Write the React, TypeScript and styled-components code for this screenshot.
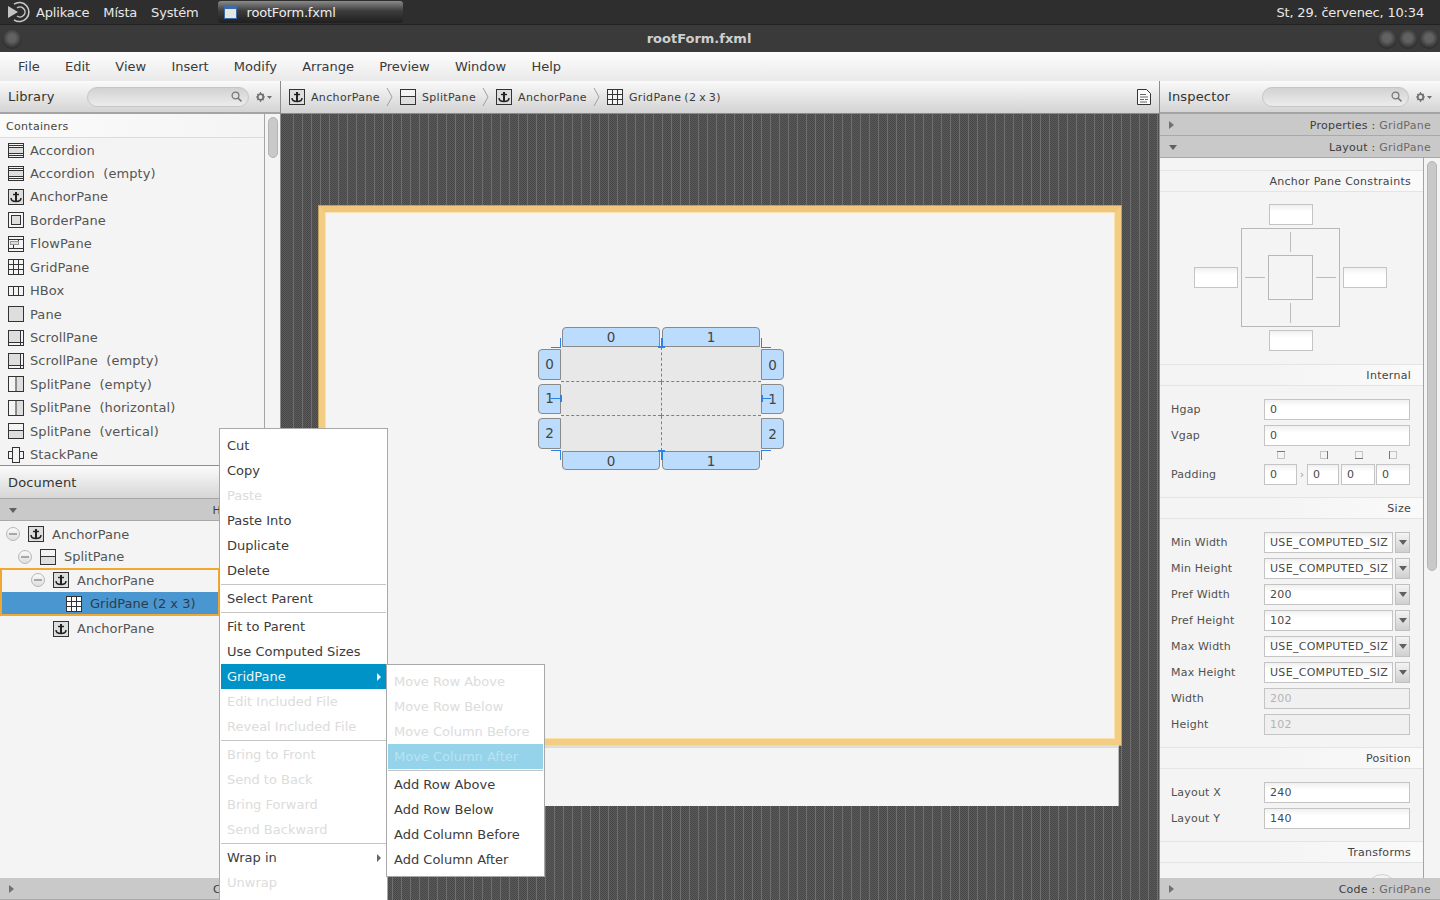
import React from "react";
import styled, { createGlobalStyle } from "styled-components";

const GlobalStyle = createGlobalStyle`
  html, body {
    margin: 0;
    padding: 0;
    width: 1440px;
    height: 900px;
    overflow: hidden;
    background: #f4f4f4;
  }
  * {
    box-sizing: border-box;
  }
  body {
    font-family: "DejaVu Sans", "Liberation Sans", sans-serif;
    font-size: 13px;
    color: #3a3a3a;
  }
`;

const Screen = styled.div`
  position: relative;
  display: flex;
  flex-direction: column;
  width: 1440px;
  height: 900px;
  overflow: hidden;
`;

/* desktop panel */
const TopPanel = styled.div`
  display: flex;
  align-items: center;
  height: 25px;
  flex: none;
  padding-left: 7px;
  background: #2e2e2e;
  border-bottom: 1px solid #222;
  color: #e8e8e8;
  letter-spacing: -0.18px;
`;

const PanelMenu = styled.span`
  margin-left: ${(p: { $gap: number }) => p.$gap}px;
`;

const TaskTab = styled.div`
  display: flex;
  align-items: center;
  gap: 10px;
  width: 185px;
  height: 22px;
  margin-left: 19px;
  padding-left: 6px;
  border-radius: 3px;
  background: linear-gradient(#8a8a8a, #3c3c3c 45%, #1f1f1f);
  color: #eee;
`;

const Clock = styled.span`
  margin-left: auto;
  margin-right: 16px;
`;

const TitleBar = styled.div`
  display: flex;
  align-items: center;
  height: 27px;
  flex: none;
  padding: 0 1px;
  background: #3a3a3b;
`;

const TitleText = styled.div`
  flex: 1;
  text-align: center;
  font-weight: bold;
  font-size: 13px;
  color: #cfcfcf;
`;

const WinButton = styled.div`
  width: 20px;
  height: 20px;
  margin-left: 1px;
  border-radius: 50%;
  background: radial-gradient(circle at 50% 45%, #626262 0 26%, #3e3e3e 56%, #2a2a2a 74%, #4c4c4c 100%);
`;

/* menubar */
const MenuBar = styled.div`
  display: flex;
  align-items: center;
  gap: 25.2px;
  height: 29px;
  flex: none;
  padding-left: 18px;
  background: linear-gradient(#fdfdfd, #e9e9e9);
`;

const Columns = styled.div`
  display: flex;
  flex: 1;
  min-height: 0;
`;

/* shared panel parts */
const SidePanel = styled.div<{ $w: number }>`
  display: flex;
  flex-direction: column;
  flex: none;
  width: ${(p) => p.$w}px;
  background: #f4f4f4;
`;

const PanelHeader = styled.div`
  display: flex;
  align-items: center;
  height: 33px;
  flex: none;
  padding: 0 7px 0 8px;
  background: linear-gradient(#fafafa, #d4d4d4);
  border-bottom: 2px solid #a4a4a4;
`;

const PanelTitle = styled.span<{ $w: number }>`
  width: ${(p) => p.$w}px;
  font-size: 13px;
  letter-spacing: 0.15px;
  color: #333;
`;

const SearchBox = styled.div<{ $w: number }>`
  display: flex;
  align-items: center;
  justify-content: flex-end;
  width: ${(p) => p.$w}px;
  height: 20px;
  padding-right: 6px;
  border: 1px solid #c6c6c6;
  border-radius: 10px;
  background: linear-gradient(#d2d2d2, #ececec);
`;

const GearWrap = styled.div`
  display: flex;
  margin-left: 7px;
`;

const GreyBar = styled.div`
  display: flex;
  align-items: center;
  justify-content: space-between;
  height: 22px;
  flex: none;
  padding: 1px 9px 0 9px;
  background: #c9c9c9;
  border-bottom: 1px solid #a9a9a9;
  font-size: 11px;
  letter-spacing: 0.25px;
  color: #3d3d3d;
`;

/* what shows of the bar title before the context menu covers it */
const BarStub = styled.span`
  margin-right: 50px;
`;

const Faint = styled.span`
  color: #6a6a6a;
`;

const Tri = styled.span<{ $down?: boolean }>`
  display: inline-block;
  width: 0;
  height: 0;
  ${(p) =>
    p.$down
      ? "border-left: 4px solid transparent; border-right: 4px solid transparent; border-top: 5px solid #606060;"
      : "border-top: 4px solid transparent; border-bottom: 4px solid transparent; border-left: 5px solid #707070;"}
`;

const ScrollColumn = styled.div<{ $w: number }>`
  flex: none;
  width: ${(p) => p.$w}px;
  border-left: 1px solid #a4a4a4;
  padding: 3px 2px 0 3px;
`;

const ScrollThumb = styled.div<{ $h: number }>`
  width: 10px;
  height: ${(p) => p.$h}px;
  border: 1px solid #b4b4b4;
  border-radius: 5px;
  background: #c9c9c9;
`;

/* library */
const LibraryBody = styled.div`
  display: flex;
  height: 352px;
  flex: none;
  border-bottom: 1px solid #8c8c8c;
`;

const LibraryList = styled.div`
  flex: 1;
  min-width: 0;
`;

const SectionHead = styled.div`
  display: flex;
  align-items: center;
  height: 24.3px;
  padding: 1px 0 0 6px;
  border-bottom: 1px solid #dcdcdc;
  background: linear-gradient(90deg, #fbfbfb, #f4f4f4);
  font-size: 11px;
  letter-spacing: 0.3px;
  color: #444;
`;

const LibraryRow = styled.div`
  display: flex;
  align-items: center;
  gap: 6px;
  height: 23.45px;
  padding-left: 8px;
  color: #555;
  white-space: pre;
  letter-spacing: 0.08px;
`;

const DocumentHeader = styled.div`
  display: flex;
  align-items: center;
  height: 33px;
  flex: none;
  padding-left: 8px;
  background: linear-gradient(#fbfbfb, #d6d6d6);
  border-bottom: 1px solid #a6a6a6;
  font-size: 13px;
  letter-spacing: 0.15px;
  color: #333;
`;

const Tree = styled.div`
  flex: 1;
  padding-top: 2px;
`;

const TreeRow = styled.div<{ $indent: number; $h: number; $sel?: boolean; $pt?: number; $pb?: number }>`
  display: flex;
  align-items: center;
  height: ${(p) => p.$h}px;
  padding: ${(p) => p.$pt ?? 0}px 0 ${(p) => p.$pb ?? 0}px ${(p) => p.$indent}px;
  background: ${(p) => (p.$sel ? "#4a96d0" : "transparent")};
  color: ${(p) => (p.$sel ? "#2c3c4c" : "#555")};
`;

const TreeLabel = styled.span<{ $gap: number }>`
  margin-left: ${(p) => p.$gap}px;
`;

const Collapse = styled.span`
  display: flex;
  align-items: center;
  justify-content: center;
  flex: none;
  width: 14px;
  height: 14px;
  margin-right: 8px;
  border: 1px solid #b8b8b8;
  border-radius: 50%;
  background: linear-gradient(#fafafa, #dedede);
  &::after {
    content: "";
    width: 8px;
    height: 2px;
    background: #a8a8a8;
  }
`;

const Spacer = styled.span<{ $w: number }>`
  flex: none;
  width: ${(p) => p.$w}px;
`;

const SelectionBox = styled.div`
  height: 48px;
  width: 220px;
  border: 2px solid #f0a830;
`;

/* centre */
const Center = styled.div`
  display: flex;
  flex-direction: column;
  flex: 1;
  min-width: 0;
  border-left: 1px solid #8c8c8c;
  border-right: 1px solid #8c8c8c;
`;

const Crumbs = styled.div`
  display: flex;
  align-items: center;
  height: 33px;
  flex: none;
  padding: 0 8px 0 8px;
  background: linear-gradient(#fafafa, #d2d2d2);
  border-bottom: 1px solid #8c8c8c;
  font-size: 11px;
  letter-spacing: 0.35px;
  word-spacing: -1px;
  color: #3a3a3a;
`;

const CrumbLabel = styled.span`
  margin-left: 6px;
`;

const CrumbChevron = styled.svg`
  margin: 0 7px 0 6px;
  flex: none;
`;

const DocIcon = styled.svg`
  margin-left: auto;
  flex: none;
`;

const Canvas = styled.div`
  position: relative;
  flex: 1;
  padding: 92px 38px 0 38px;
  background-color: #4c4c4c;
  background-image: repeating-linear-gradient(90deg, transparent 0 8px, #6e6e6e 8px 9px),
    repeating-conic-gradient(#484848 0 25%, #5a5a5a 0 50%);
  background-size: auto, 2px 2px;
  background-position: 4px 0, 0 0;
`;

const SceneFrame = styled.div`
  height: 539px;
  border: 6px solid #f3cd82;
  border-top-color: #f0c77c;
  box-shadow: inset 0 0 0 1px #fae2ae, 0 0 0 1px #c2a060;
  background: #f4f4f4;
`;

const SceneStrip = styled.div`
  height: 61px;
  margin: 0 2px 0 6px;
  background: #f4f4f4;
  border-top: 3px solid #dcdcdc;
  border-left: 1px solid #ccc;
  border-right: 1px solid #bbb;
`;

const GridWidget = styled.div`
  position: absolute;
  left: 257px;
  top: 213px;
  display: grid;
  grid-template-columns: 23px 100px 100px 23px;
  grid-template-rows: 20px 35px 34px 35px 19px;
  width: 246px;
  height: 143px;
`;

const GridBody = styled.div`
  grid-column: 2 / 4;
  grid-row: 2 / 5;
  display: grid;
  grid-template-columns: 1fr 1fr;
  grid-template-rows: 35px 34px 35px;
  background: #e8e8e8;
`;

const GridCell = styled.div<{ $l?: boolean; $b?: boolean }>`
  border-left: ${(p) => (p.$l ? "1px dashed #808080" : "none")};
  border-bottom: ${(p) => (p.$b ? "1px dashed #808080" : "none")};
`;

const Handle = styled.div<{ $col: number; $row: number; $side: "t" | "b" | "l" | "r" }>`
  grid-column: ${(p) => p.$col};
  grid-row: ${(p) => p.$row};
  display: flex;
  align-items: center;
  justify-content: center;
  margin: ${(p) => (p.$side === "t" || p.$side === "b" ? "0 1px" : "2px 0")};
  padding-bottom: ${(p) => (p.$side === "l" ? 2 : 0)}px;
  border: 1px solid #8a8a8a;
  background: #bbdcfd;
  font-size: 13.5px;
  color: #444;
  border-radius: ${(p) =>
    p.$side === "t"
      ? "4px 4px 0 0"
      : p.$side === "b"
        ? "0 0 4px 4px"
        : p.$side === "l"
          ? "4px 0 0 4px"
          : "0 4px 4px 0"};
`;

const Tick = styled.div<{ $x: number; $y: number; $w: number; $h: number }>`
  position: absolute;
  left: ${(p) => p.$x}px;
  top: ${(p) => p.$y}px;
  width: ${(p) => p.$w}px;
  height: ${(p) => p.$h}px;
  background: #2c82e6;
`;

/* inspector */
const InspectorBody = styled.div`
  display: flex;
  flex: 1;
  min-height: 0;
`;

const InspectorForm = styled.div`
  position: relative;
  flex: 1;
  min-width: 0;
  padding-top: 12px;
  overflow: hidden;
`;

const FormSection = styled.div`
  display: flex;
  align-items: center;
  justify-content: flex-end;
  height: 22px;
  padding-right: 12px;
  border-top: 1px solid #e4e4e4;
  border-bottom: 1px solid #e4e4e4;
  background: linear-gradient(90deg, #f4f4f4 40%, #fafafa);
  font-size: 11px;
  letter-spacing: 0.28px;
  color: #444;
`;

const FormRows = styled.div<{ $top: number; $bottom: number }>`
  display: flex;
  flex-direction: column;
  gap: 5px;
  padding: ${(p) => p.$top}px 13px ${(p) => p.$bottom}px 11px;
`;

const FormRow = styled.div`
  display: flex;
  align-items: center;
  height: 21px;
  font-size: 11px;
  letter-spacing: 0.2px;
  color: #505050;
`;

const FormLabel = styled.span`
  width: 93px;
  flex: none;
`;

const Field = styled.div<{ $off?: boolean; $w?: number }>`
  display: flex;
  align-items: center;
  flex: ${(p) => (p.$w ? "none" : "1")};
  width: ${(p) => (p.$w ? `${p.$w}px` : "auto")};
  min-width: 0;
  height: 21px;
  padding-left: 5px;
  border: 1px solid #c4c4c4;
  background: ${(p) => (p.$off ? "#f0f0f0" : "linear-gradient(#f0f0f0, #fff 35%)")};
  color: ${(p) => (p.$off ? "#b4b4b4" : "#4a4a4a")};
  font-size: 11px;
  letter-spacing: 0.3px;
  white-space: nowrap;
  overflow: hidden;
`;

const Combo = styled.div`
  display: flex;
  justify-content: center;
  align-items: center;
  flex: none;
  width: 15px;
  height: 21px;
  margin-left: 2px;
  border: 1px solid #c0c0c0;
  background: linear-gradient(#f4f4f4, #cfcfcf);
`;

const PadMarks = styled.div`
  display: flex;
  height: 13px;
  margin: 0 0 -5px 93px;
`;

const PadMark = styled.svg<{ $x: number }>`
  margin-left: ${(p) => p.$x}px;
  flex: none;
`;

const PadArrow = styled.span`
  flex: none;
  width: 10px;
  text-align: center;
  color: #a0a0a0;
  font-size: 11px;
`;

const ConstraintArea = styled.div`
  display: grid;
  grid-template-columns: 44px 99px 44px;
  grid-template-rows: 21px 99px 21px;
  column-gap: 3px;
  row-gap: 3px;
  justify-content: center;
  align-items: center;
  justify-items: center;
  height: 172px;
  padding: 12px 2px 0 0;
`;

const ConstraintBox = styled.div`
  position: relative;
  grid-column: 2;
  grid-row: 2;
  width: 99px;
  height: 99px;
  border: 1px solid #b8b8b8;
  display: flex;
  align-items: center;
  justify-content: center;
`;

const ConstraintInner = styled.div`
  width: 45px;
  height: 45px;
  border: 1px solid #b8b8b8;
`;

const ConstraintLine = styled.div<{ $x: number; $y: number; $w: number; $h: number }>`
  position: absolute;
  left: ${(p) => p.$x}px;
  top: ${(p) => p.$y}px;
  width: ${(p) => p.$w}px;
  height: ${(p) => p.$h}px;
  background: #bcbcbc;
`;

const ConstraintInput = styled.div<{ $col: number; $row: number }>`
  grid-column: ${(p) => p.$col};
  grid-row: ${(p) => p.$row};
  width: 44px;
  height: 21px;
  border: 1px solid #c4c4c4;
  background: linear-gradient(#f0f0f0, #fff 35%);
`;

const PeekCircle = styled.div`
  position: absolute;
  left: 207px;
  top: 716px;
  width: 30px;
  height: 30px;
  border: 1px solid #d0d0d0;
  border-radius: 50%;
`;

/* context menus */
const Popup = styled.div<{ $x: number; $y: number; $w: number; $h: number }>`
  position: absolute;
  left: ${(p) => p.$x}px;
  top: ${(p) => p.$y}px;
  width: ${(p) => p.$w}px;
  height: ${(p) => p.$h}px;
  padding: 4px 1px;
  background: #fff;
  border: 1px solid #a8a8a8;
`;

const PopupItem = styled.div<{ $off?: boolean; $sel?: boolean; $dim?: boolean }>`
  display: flex;
  align-items: center;
  justify-content: space-between;
  height: 25px;
  padding: 0 6px;
  color: ${(p) => (p.$sel ? "#eaf6fb" : p.$off ? "#dcdcdc" : "#3c3c3c")};
  background: ${(p) => (p.$sel ? "#0093c8" : p.$dim ? "#94d3ea" : "transparent")};
  ${(p) => p.$dim && "color: #b8e3f2;"}
`;

const PopupRule = styled.div`
  height: 1px;
  margin: 1px 0;
  background: #c4c4c4;
`;

const PopupArrow = styled.span<{ $c: string }>`
  width: 0;
  height: 0;
  margin-right: -1px;
  border-top: 4px solid transparent;
  border-bottom: 4px solid transparent;
  border-left: 4px solid ${(p) => p.$c};
`;

type Kind =
  | "accordion"
  | "anchor"
  | "border"
  | "flow"
  | "grid"
  | "hbox"
  | "pane"
  | "scroll"
  | "splitH"
  | "splitV"
  | "stack";

function PaneIcon({ kind, light }: { kind: Kind; light?: boolean }): JSX.Element {
  const s = "#333";
  const f = "#dedede";
  return (
    <svg width="16" height="16" viewBox="0 0 16 16" fill="none" style={{ flex: "none" }}>
      {kind === "accordion" && (
        <g stroke={s}>
          <rect x="0.5" y="1.5" width="15" height="14" fill="#f4f4f4" />
          <rect x="0.5" y="5.5" width="15" height="6" fill={f} />
          <path d="M1 3.5h14M1 13.5h14" />
        </g>
      )}
      {kind === "anchor" && (
        <g>
          <rect x="0.5" y="0.5" width="15" height="15" fill={f} stroke={s} />
          <path d="M8 3v9" stroke="#222" strokeWidth="2" />
          <path d="M5 5.500h6" stroke="#222" strokeWidth="1.400" />
          <path d="M3 9c0 2.800 2.200 3.500 5 3.500s5-.7 5-3.500" stroke="#222" strokeWidth="1.500" />
        </g>
      )}
      {kind === "border" && (
        <g stroke={s}>
          <rect x="0.5" y="0.5" width="15" height="15" fill="#f4f4f4" />
          <rect x="3.5" y="3.5" width="9" height="9" fill={f} />
        </g>
      )}
      {kind === "flow" && (
        <g stroke={s}>
          <rect x="0.5" y="0.5" width="15" height="15" fill="#f4f4f4" />
          <path d="M1 3.500h14M1 12.500h14M10.500 3.500v4M5.500 12.500v-4" />
          <rect x="2.500" y="5.500" width="8" height="3" fill={f} stroke="#999" />
        </g>
      )}
      {kind === "grid" && (
        <g stroke={s}>
          <rect x="0.5" y="0.5" width="15" height="15" fill={light ? "#fff" : "#f4f4f4"} />
          <path d="M5.500 1v14M10.500 1v14M1 5.500h14M1 10.500h14" />
        </g>
      )}
      {kind === "hbox" && (
        <g stroke={s}>
          <rect x="0.5" y="3.5" width="15" height="9" fill="#f4f4f4" />
          <path d="M5.500 4v8M10.500 4v8" />
        </g>
      )}
      {kind === "pane" && <rect x="0.5" y="0.5" width="15" height="15" fill={f} stroke={s} />}
      {kind === "scroll" && (
        <g stroke={s}>
          <rect x="0.5" y="0.5" width="15" height="15" fill={f} />
          <path d="M13 1h2v14h-2zM1 13h14v2H1z" fill="#f4f4f4" stroke="none" />
          <path d="M12.500 1v14M1 12.500h14" />
        </g>
      )}
      {kind === "splitH" && (
        <g stroke={s}>
          <rect x="0.5" y="0.5" width="15" height="15" fill={f} />
          <rect x="1" y="1" width="6.500" height="14" fill="#f4f4f4" stroke="none" />
          <path d="M8 1v14" />
        </g>
      )}
      {kind === "splitV" && (
        <g stroke={s}>
          <rect x="0.5" y="0.5" width="15" height="15" fill="#f4f4f4" />
          <rect x="1" y="8" width="14" height="7" fill={f} stroke="none" />
          <path d="M1 7.500h14" />
        </g>
      )}
      {kind === "stack" && (
        <g stroke={s} fill="#f4f4f4">
          <rect x="0.500" y="4.500" width="15" height="7" />
          <rect x="4.500" y="0.500" width="7" height="15" />
        </g>
      )}
    </svg>
  );
}

function Magnifier(): JSX.Element {
  return (
    <svg width="11" height="11" viewBox="0 0 11 11" fill="none" stroke="#777" strokeWidth="1.3">
      <circle cx="4.500" cy="4.500" r="3.400" />
      <path d="M7 7l3.400 3.400" strokeWidth="1.600" />
    </svg>
  );
}

function Gear(): JSX.Element {
  return (
    <svg width="16" height="10" viewBox="0 0 16 10">
      <circle cx="4.500" cy="5" r="2.800" fill="none" stroke="#707070" strokeWidth="1.800" />
      <path d="M4.500 0v2M4.500 8v2M0 5h2M7 5h2M1.300 1.800l1.400 1.400M6.300 6.800l1.400 1.400M7.700 1.800L6.300 3.200M2.700 6.800L1.300 8.200" stroke="#707070" strokeWidth="1.200" />
      <path d="M11 4h5l-2.500 3z" fill="#707070" />
    </svg>
  );
}

function Logo(): JSX.Element {
  return (
    <svg width="23" height="22" viewBox="0 0 23 22" fill="none" style={{ flex: "none" }}>
      <path d="M7 3.200A9.500 9.500 0 1 1 7 18.800" stroke="#c8c8c8" strokeWidth="1.600" />
      <path d="M10 7a5 5 0 1 1 0 8" stroke="#c8c8c8" strokeWidth="1.500" />
      <path d="M1 5l10 6-10 6z" fill="#c4c4c4" />
    </svg>
  );
}

function Chevron(): JSX.Element {
  return (
    <CrumbChevron width="7" height="20" viewBox="0 0 7 20" fill="none">
      <path d="M1 1l5 9-5 9" stroke="#a0a0a0" />
    </CrumbChevron>
  );
}

const libraryItems: [Kind, string][] = [
  ["accordion", "Accordion"],
  ["accordion", "Accordion  (empty)"],
  ["anchor", "AnchorPane"],
  ["border", "BorderPane"],
  ["flow", "FlowPane"],
  ["grid", "GridPane"],
  ["hbox", "HBox"],
  ["pane", "Pane"],
  ["scroll", "ScrollPane"],
  ["scroll", "ScrollPane  (empty)"],
  ["splitH", "SplitPane  (empty)"],
  ["splitH", "SplitPane  (horizontal)"],
  ["splitV", "SplitPane  (vertical)"],
  ["stack", "StackPane"],
];

type MenuEntry = { t?: string; off?: boolean; sel?: boolean; dim?: boolean; arrow?: string };

const mainMenu: MenuEntry[] = [
  { t: "Cut" },
  { t: "Copy" },
  { t: "Paste", off: true },
  { t: "Paste Into" },
  { t: "Duplicate" },
  { t: "Delete" },
  {},
  { t: "Select Parent" },
  {},
  { t: "Fit to Parent" },
  { t: "Use Computed Sizes" },
  { t: "GridPane", sel: true, arrow: "#f0f8fc" },
  { t: "Edit Included File", off: true },
  { t: "Reveal Included File", off: true },
  {},
  { t: "Bring to Front", off: true },
  { t: "Send to Back", off: true },
  { t: "Bring Forward", off: true },
  { t: "Send Backward", off: true },
  {},
  { t: "Wrap in", arrow: "#666" },
  { t: "Unwrap", off: true },
];

const subMenu: MenuEntry[] = [
  { t: "Move Row Above", off: true },
  { t: "Move Row Below", off: true },
  { t: "Move Column Before", off: true },
  { t: "Move Column After", dim: true },
  {},
  { t: "Add Row Above" },
  { t: "Add Row Below" },
  { t: "Add Column Before" },
  { t: "Add Column After" },
];

function MenuItems({ items }: { items: MenuEntry[] }): JSX.Element {
  return (
    <>
      {items.map((m, i) =>
        m.t ? (
          <PopupItem key={i} $off={m.off} $sel={m.sel} $dim={m.dim}>
            {m.t}
            {m.arrow && <PopupArrow $c={m.arrow} />}
          </PopupItem>
        ) : (
          <PopupRule key={i} />
        )
      )}
    </>
  );
}

const ticks: [number, number, number, number][] = [
  [22, 11, 1, 10],
  [13, 20, 10, 1],
  [223, 11, 1, 10],
  [223, 20, 10, 1],
  [123, 11, 2, 10],
  [120, 19, 7, 2],
  [13, 123, 10, 1],
  [22, 123, 1, 10],
  [223, 123, 10, 1],
  [223, 123, 1, 10],
  [120, 123, 7, 2],
  [123, 123, 2, 10],
  [13, 71, 10, 1],
  [22, 68, 2, 7],
  [223, 68, 2, 7],
  [223, 71, 10, 1],
];

const sizeRows: [string, string, "combo" | "off"][] = [
  ["Min Width", "USE_COMPUTED_SIZ", "combo"],
  ["Min Height", "USE_COMPUTED_SIZ", "combo"],
  ["Pref Width", "200", "combo"],
  ["Pref Height", "102", "combo"],
  ["Max Width", "USE_COMPUTED_SIZ", "combo"],
  ["Max Height", "USE_COMPUTED_SIZ", "combo"],
  ["Width", "200", "off"],
  ["Height", "102", "off"],
];

const padMarks: [number, string][] = [
  [13, "M0 0.500h8"],
  [35, "M7.500 0v8"],
  [27, "M0 7.500h8"],
  [26, "M0.500 0v8"],
];

export default function App(): JSX.Element {
  return (
    <Screen>
      <GlobalStyle />
      <TopPanel>
        <Logo />
        <PanelMenu $gap={6}>Aplikace</PanelMenu>
        <PanelMenu $gap={14}>Místa</PanelMenu>
        <PanelMenu $gap={14}>Systém</PanelMenu>
        <TaskTab>
          <svg width="13" height="13" viewBox="0 0 13 13" style={{ flex: "none" }}>
            <rect x="0.500" y="0.500" width="12" height="12" fill="#e6e6e0" stroke="#3d6aa8" />
            <rect x="1" y="1" width="11" height="2" fill="#3d6aa8" />
          </svg>
          rootForm.fxml
        </TaskTab>
        <Clock>St, 29. červenec, 10:34</Clock>
      </TopPanel>
      <TitleBar>
        <WinButton />
        <TitleText>rootForm.fxml</TitleText>
        <WinButton />
        <WinButton />
        <WinButton />
      </TitleBar>
      <MenuBar>
        {["File", "Edit", "View", "Insert", "Modify", "Arrange", "Preview", "Window", "Help"].map((m) => (
          <span key={m}>{m}</span>
        ))}
      </MenuBar>
      <Columns>
        <SidePanel $w={280}>
          <PanelHeader>
            <PanelTitle $w={79}>Library</PanelTitle>
            <SearchBox $w={162}>
              <Magnifier />
            </SearchBox>
            <GearWrap>
              <Gear />
            </GearWrap>
          </PanelHeader>
          <LibraryBody>
            <LibraryList>
              <SectionHead>Containers</SectionHead>
              {libraryItems.map(([k, t]) => (
                <LibraryRow key={t}>
                  <PaneIcon kind={k} />
                  {t}
                </LibraryRow>
              ))}
            </LibraryList>
            <ScrollColumn $w={16}>
              <ScrollThumb $h={41} />
            </ScrollColumn>
          </LibraryBody>
          <DocumentHeader>Document</DocumentHeader>
          <GreyBar>
            <Tri $down />
            <BarStub>H</BarStub>
          </GreyBar>
          <Tree>
            <TreeRow $indent={6} $h={22}>
              <Collapse />
              <PaneIcon kind="anchor" />
              <TreeLabel $gap={8}>AnchorPane</TreeLabel>
            </TreeRow>
            <TreeRow $indent={18} $h={23}>
              <Collapse />
              <PaneIcon kind="splitV" />
              <TreeLabel $gap={8}>SplitPane</TreeLabel>
            </TreeRow>
            <SelectionBox>
              <TreeRow $indent={29} $h={22} $pb={2}>
                <Collapse />
                <PaneIcon kind="anchor" />
                <TreeLabel $gap={8}>AnchorPane</TreeLabel>
              </TreeRow>
              <TreeRow $indent={64} $h={22} $pt={1} $sel>
                <PaneIcon kind="grid" light />
                <TreeLabel $gap={8}>GridPane (2 x 3)</TreeLabel>
              </TreeRow>
            </SelectionBox>
            <TreeRow $indent={53} $h={25}>
              <Spacer $w={0} />
              <PaneIcon kind="anchor" />
              <TreeLabel $gap={8}>AnchorPane</TreeLabel>
            </TreeRow>
          </Tree>
          <GreyBar>
            <Tri />
            <BarStub>C</BarStub>
          </GreyBar>
        </SidePanel>

        <Center>
          <Crumbs>
            <PaneIcon kind="anchor" />
            <CrumbLabel>AnchorPane</CrumbLabel>
            <Chevron />
            <PaneIcon kind="splitV" />
            <CrumbLabel>SplitPane</CrumbLabel>
            <Chevron />
            <PaneIcon kind="anchor" />
            <CrumbLabel>AnchorPane</CrumbLabel>
            <Chevron />
            <PaneIcon kind="grid" />
            <CrumbLabel>GridPane (2 x 3)</CrumbLabel>
            <DocIcon width="14" height="16" viewBox="0 0 14 16" fill="none" stroke="#333">
              <path d="M0.500 0.500h9l4 4v11h-13z" fill="#fafafa" />
              <path d="M3 5.500h6M3 8h8M3 10.500h4M8 10.500h3M3 13h7" stroke="#666" />
            </DocIcon>
          </Crumbs>
          <Canvas>
            <SceneFrame />
            <SceneStrip />
            <GridWidget>
              {[0, 1].map((n) => (
                <Handle key={`t${n}`} $col={n + 2} $row={1} $side="t">
                  {n}
                </Handle>
              ))}
              {[0, 1, 2].map((n) => (
                <Handle key={`l${n}`} $col={1} $row={n + 2} $side="l">
                  {n}
                </Handle>
              ))}
              <GridBody>
                <GridCell $b />
                <GridCell $l $b />
                <GridCell $b />
                <GridCell $l $b />
                <GridCell />
                <GridCell $l />
              </GridBody>
              {[0, 1, 2].map((n) => (
                <Handle key={`r${n}`} $col={4} $row={n + 2} $side="r">
                  {n}
                </Handle>
              ))}
              {[0, 1].map((n) => (
                <Handle key={`b${n}`} $col={n + 2} $row={5} $side="b">
                  {n}
                </Handle>
              ))}
              {ticks.map(([x, y, w, h], i) => (
                <Tick key={i} $x={x} $y={y} $w={w} $h={h} />
              ))}
            </GridWidget>
          </Canvas>
        </Center>

        <SidePanel $w={280}>
          <PanelHeader>
            <PanelTitle $w={94}>Inspector</PanelTitle>
            <SearchBox $w={147}>
              <Magnifier />
            </SearchBox>
            <GearWrap>
              <Gear />
            </GearWrap>
          </PanelHeader>
          <GreyBar>
            <Tri />
            <span>
              Properties : <Faint>GridPane</Faint>
            </span>
          </GreyBar>
          <GreyBar>
            <Tri $down />
            <span>
              Layout : <Faint>GridPane</Faint>
            </span>
          </GreyBar>
          <InspectorBody>
            <InspectorForm>
              <FormSection>Anchor Pane Constraints</FormSection>
              <ConstraintArea>
                <ConstraintInput $col={2} $row={1} />
                <ConstraintInput $col={1} $row={2} />
                <ConstraintBox>
                  <ConstraintInner />
                  <ConstraintLine $x={48} $y={3} $w={1} $h={20} />
                  <ConstraintLine $x={48} $y={74} $w={1} $h={20} />
                  <ConstraintLine $x={3} $y={48} $w={20} $h={1} />
                  <ConstraintLine $x={74} $y={48} $w={20} $h={1} />
                </ConstraintBox>
                <ConstraintInput $col={3} $row={2} />
                <ConstraintInput $col={2} $row={3} />
              </ConstraintArea>
              <FormSection>Internal</FormSection>
              <FormRows $top={13} $bottom={12}>
                <FormRow>
                  <FormLabel>Hgap</FormLabel>
                  <Field>0</Field>
                </FormRow>
                <FormRow>
                  <FormLabel>Vgap</FormLabel>
                  <Field>0</Field>
                </FormRow>
                <PadMarks>
                  {padMarks.map(([x, edge], i) => (
                    <PadMark key={i} $x={x} width="8" height="8" viewBox="0 0 8 8" fill="none" stroke="#c4c4c4">
                      <rect x="0.500" y="0.500" width="7" height="7" />
                      <path d={edge} stroke="#777" />
                    </PadMark>
                  ))}
                </PadMarks>
                <FormRow>
                  <FormLabel>Padding</FormLabel>
                  <Field $w={33}>0</Field>
                  <PadArrow>›</PadArrow>
                  <Field $w={32}>0</Field>
                  <Spacer $w={2} />
                  <Field $w={34}>0</Field>
                  <Spacer $w={1} />
                  <Field $w={34}>0</Field>
                </FormRow>
              </FormRows>
              <FormSection>Size</FormSection>
              <FormRows $top={13} $bottom={12}>
                {sizeRows.map(([label, value, mode]) => (
                  <FormRow key={label}>
                    <FormLabel>{label}</FormLabel>
                    <Field $off={mode === "off"}>{value}</Field>
                    {mode === "combo" && (
                      <Combo>
                        <Tri $down />
                      </Combo>
                    )}
                  </FormRow>
                ))}
              </FormRows>
              <FormSection>Position</FormSection>
              <FormRows $top={13} $bottom={12}>
                <FormRow>
                  <FormLabel>Layout X</FormLabel>
                  <Field>240</Field>
                </FormRow>
                <FormRow>
                  <FormLabel>Layout Y</FormLabel>
                  <Field>140</Field>
                </FormRow>
              </FormRows>
              <FormSection>Transforms</FormSection>
              <PeekCircle />
            </InspectorForm>
            <ScrollColumn $w={17}>
              <ScrollThumb $h={410} />
            </ScrollColumn>
          </InspectorBody>
          <GreyBar>
            <Tri />
            <span>
              Code : <Faint>GridPane</Faint>
            </span>
          </GreyBar>
        </SidePanel>
      </Columns>

      <Popup $x={219} $y={428} $w={169} $h={474}>
        <MenuItems items={mainMenu} />
      </Popup>
      <Popup $x={386} $y={664} $w={159} $h={213}>
        <MenuItems items={subMenu} />
      </Popup>
    </Screen>
  );
}
